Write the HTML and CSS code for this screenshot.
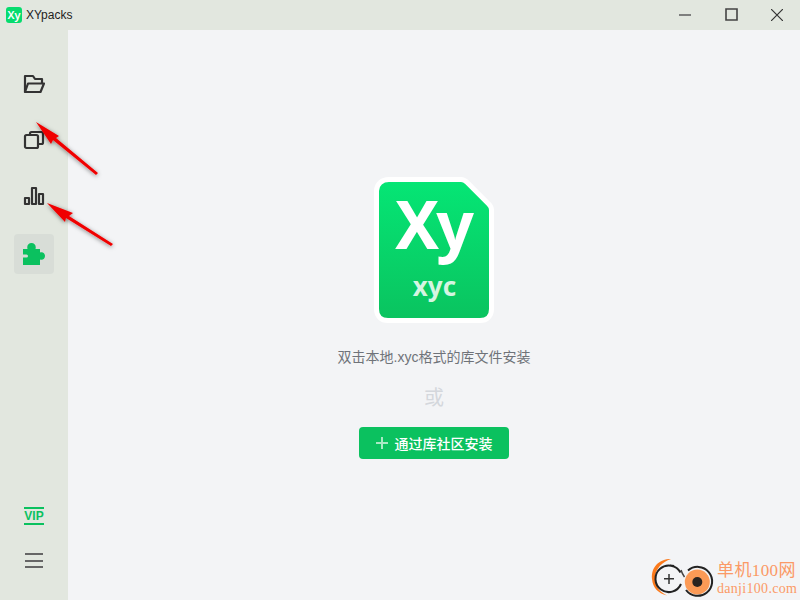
FILE: index.html
```html
<!DOCTYPE html>
<html lang="zh">
<head>
<meta charset="utf-8">
<title>XYpacks</title>
<link rel="stylesheet" href="styles.css">
</head>
<body>
<div class="app">
  <header class="titlebar">
    <div class="brand">
      <span class="brand-logo">Xy</span>
      <span class="brand-name">XYpacks</span>
    </div>
    <div class="win-controls">
      <span class="win-btn"><svg width="12" height="12" viewBox="0 0 12 12"><path d="M0 6h12" class="win-min"/></svg></span>
      <span class="win-btn"><svg width="13" height="13" viewBox="0 0 13 13"><path d="M1 1h11v11H1z" class="win-max"/></svg></span>
      <span class="win-btn"><svg width="12" height="12" viewBox="0 0 12 12"><path d="M0 0l12 12M12 0L0 12" class="win-stroke"/></svg></span>
    </div>
  </header>
  <div class="body">
    <aside class="sidebar">
      <nav class="nav">
        <span class="nav-item"><svg width="22" height="20" viewBox="0 0 22 20" fill="none" class="nav-icon"><path d="M2 18V2h8l2 3h7v4"/><path d="M2 18h15.500L21 9.500H5z"/></svg></span>
        <span class="nav-item"><svg width="22" height="22" viewBox="0 0 22 22" fill="none" class="nav-icon"><rect x="2" y="6" width="13" height="13" rx="1.500"/><path d="M7 6V4.500Q7 3 8.500 3h10Q20 3 20 4.500V13.500Q20 15 18.500 15H15"/></svg></span>
        <span class="nav-item"><svg width="22" height="20" viewBox="0 0 22 20" fill="none" class="nav-icon"><path d="M2 12h4v6H2zM9 2h4v16H9zM16 8h4v10h-4z"/></svg></span>
        <span class="nav-item nav-item-active"><svg width="22" height="22" viewBox="0 0 22 22"><path d="M0 6h4.500C3.500 2.500 5.500 0 8.500 0s5 2.500 4 6H17v3.500c2.500-1 5 .500 5 3.500s-2.500 4.500-5 3.500V22H0v-7.500h3.500a1.500 1.500 0 0 0 0-3H0z" fill="#0bc15f"/></svg></span>
      </nav>
      <div class="side-bottom">
        <span class="vip">VIP</span>
        <span class="menu"><i></i><i></i><i></i></span>
      </div>
    </aside>
    <main class="main">
      <svg class="doc" width="120" height="148" viewBox="0 0 120 148">
        <defs>
          <linearGradient id="docfill" x1="0" y1="0" x2="0" y2="1">
            <stop offset="0" stop-color="#05e675"/>
            <stop offset="1" stop-color="#0ac35f"/>
          </linearGradient>
        </defs>
        <path d="M15 3.500h72c2.500 0 4 .800 6 2.800l21.700 21.700c2 2 2.800 3.500 2.800 6V133c0 7-4.500 11.500-11.500 11.500H14c-7 0-11.500-4.500-11.500-11.500V15C2.500 8 8 3.500 15 3.500z" fill="url(#docfill)" stroke="#fff" stroke-width="5"/>
        <text x="59" y="73" class="doc-xy">Xy</text>
        <text x="60.500" y="120" class="doc-ext">xyc</text>
      </svg>
      <p class="hint">双击本地.xyc格式的库文件安装</p>
      <p class="or">或</p>
      <button class="install" type="button">
        <svg class="plus" width="12" height="12" viewBox="0 0 12 12"><path d="M0 6h12M6 0v12"/></svg>
        <span>通过库社区安装</span>
      </button>
    </main>
  </div>
</div>
<svg class="arrows" width="130" height="140" viewBox="0 0 130 140">
  <defs><filter id="sh" x="-20%" y="-20%" width="140%" height="140%"><feDropShadow dx="0" dy="1" stdDeviation="2" flood-color="#000" flood-opacity=".5"/></filter></defs>
  <g filter="url(#sh)" fill="#f00000">
    <path d="M36 4L59 18L56 20L98 55L96 57L53 22L51 26Z"/>
    <path d="M47 85L73 95L69 98L113 126L111 128L66 100L65 104Z"/>
  </g>
</svg>
<div class="mark">
  <svg width="66" height="44" viewBox="0 0 66 44" fill="none">
    <path d="M21 3C9 3 1 11 2 23c.800 9 6 14 15 16.500-6-3-12-8-12-17C5 13 12 6 21 3z" fill="#fb7a1c"/>
    <path d="M30.500 16.500A13.300 13.300 0 1 0 31 28M24 10A13.300 13.300 0 0 0 20 9.500" stroke="#222" stroke-width="2"/>
    <path d="M14 22.700h10M19 18v10" stroke="#333" stroke-width="1.500"/>
    <path d="M31 14c1 3 2 5 3.500 7" stroke="#444" stroke-width="1.500"/>
    <circle cx="47.300" cy="26" r="12.500" fill="#fb9a56"/>
    <path d="M38 14.500A14.500 14.500 0 1 1 36 34" stroke="#222" stroke-width="2"/>
    <circle cx="47.300" cy="26" r="5" fill="#2a2420"/>
  </svg>
  <div class="mark-text">
    <span class="mark-cn">单机100网</span>
    <span class="mark-en">danji100.com</span>
  </div>
</div>
</body>
</html>
```
FILE: styles.css
```css
html, body { margin: 0; padding: 0; }
body {
  width: 800px;
  height: 600px;
  overflow: hidden;
  position: relative;
  font-family: "Liberation Sans", "Noto Sans CJK SC", sans-serif;
}
.app { display: flex; flex-direction: column; height: 600px; background: #e2e7df; }
.titlebar { height: 30px; display: flex; justify-content: space-between; align-items: center; flex: none; }
.brand { display: flex; align-items: center; gap: 4px; padding-left: 6px; }
.brand-logo {
  width: 16px; height: 16px; border-radius: 3px; background: #06dc6e; color: #fff;
  font: 600 11px/16px "Noto Sans", sans-serif; text-align: center;
}
.brand-name { font-size: 12px; color: #222; }
.win-controls { display: flex; align-self: flex-start; }
.win-btn { width: 46px; height: 29px; display: flex; align-items: center; justify-content: center; }
.win-stroke { fill: none; stroke: #333; stroke-width: 1.2; }
.win-min { fill: none; stroke: #666; stroke-width: 1.6; }
.win-max { fill: none; stroke: #444; stroke-width: 1.6; }
.body { flex: 1; display: flex; min-height: 0; }
.sidebar { width: 68px; flex: none; display: flex; flex-direction: column; justify-content: space-between; align-items: center; }
.nav { display: flex; flex-direction: column; align-items: center; gap: 16px; padding-top: 34px; }
.nav-item { width: 40px; height: 40px; display: flex; align-items: center; justify-content: center; border-radius: 4px; }
.nav-item-active { background: #d8ddd7; margin-top: 2px; }
.nav-icon { stroke: #333; stroke-width: 2.2; stroke-linejoin: round; }
.side-bottom { display: flex; flex-direction: column; align-items: center; gap: 28px; padding-bottom: 32px; }
.vip {
  width: 20px; border-top: 2px solid #0bc15f; border-bottom: 2px solid #0bc15f;
  color: #0bc15f; font: bold 12px/14px "Liberation Sans", sans-serif; text-align: center;
}
.menu { display: flex; flex-direction: column; gap: 4.5px; }
.menu i { display: block; width: 18px; height: 2px; background: #666; }
.main { flex: 1; background: #f3f4f6; display: flex; flex-direction: column; align-items: center; padding-top: 146px; }
.doc { display: block; }
.doc-xy { font: 700 66px "Noto Sans", sans-serif; letter-spacing: -3px; fill: #fff; text-anchor: middle; }
.doc-ext { font: 700 26px "Noto Sans", sans-serif; fill: #d5f5e2; text-anchor: middle; }
.hint { margin: 24px 0 0; font-size: 14px; line-height: 18px; color: #6f7379; }
.or { margin: 20px 0 0; font-size: 20px; line-height: 24px; color: #d4d7dc; }
.install {
  margin: 17px 0 0; width: 150px; height: 32px; border: 0; border-radius: 4px; background: #0bc15f; color: #fff;
  font: 500 14px "Liberation Sans", "Noto Sans CJK SC", sans-serif; display: flex; align-items: center; justify-content: center; gap: 7px; padding: 0;
}
.plus { stroke: #a9e9c4; stroke-width: 2; fill: none; }
.arrows { position: absolute; left: 0; top: 118px; pointer-events: none; }
.mark { position: absolute; left: 650px; top: 556px; display: flex; gap: 1px; }
.mark-text { display: flex; flex-direction: column; padding-top: 4px; }
.mark-cn { font: 17px/21px "Liberation Serif", "Noto Sans CJK SC", serif; color: #fb9a66; letter-spacing: .4px; white-space: nowrap; }
.mark-en { font: 14px/15px "Liberation Serif", serif; color: #fb9a66; letter-spacing: .3px; white-space: nowrap; }
```
